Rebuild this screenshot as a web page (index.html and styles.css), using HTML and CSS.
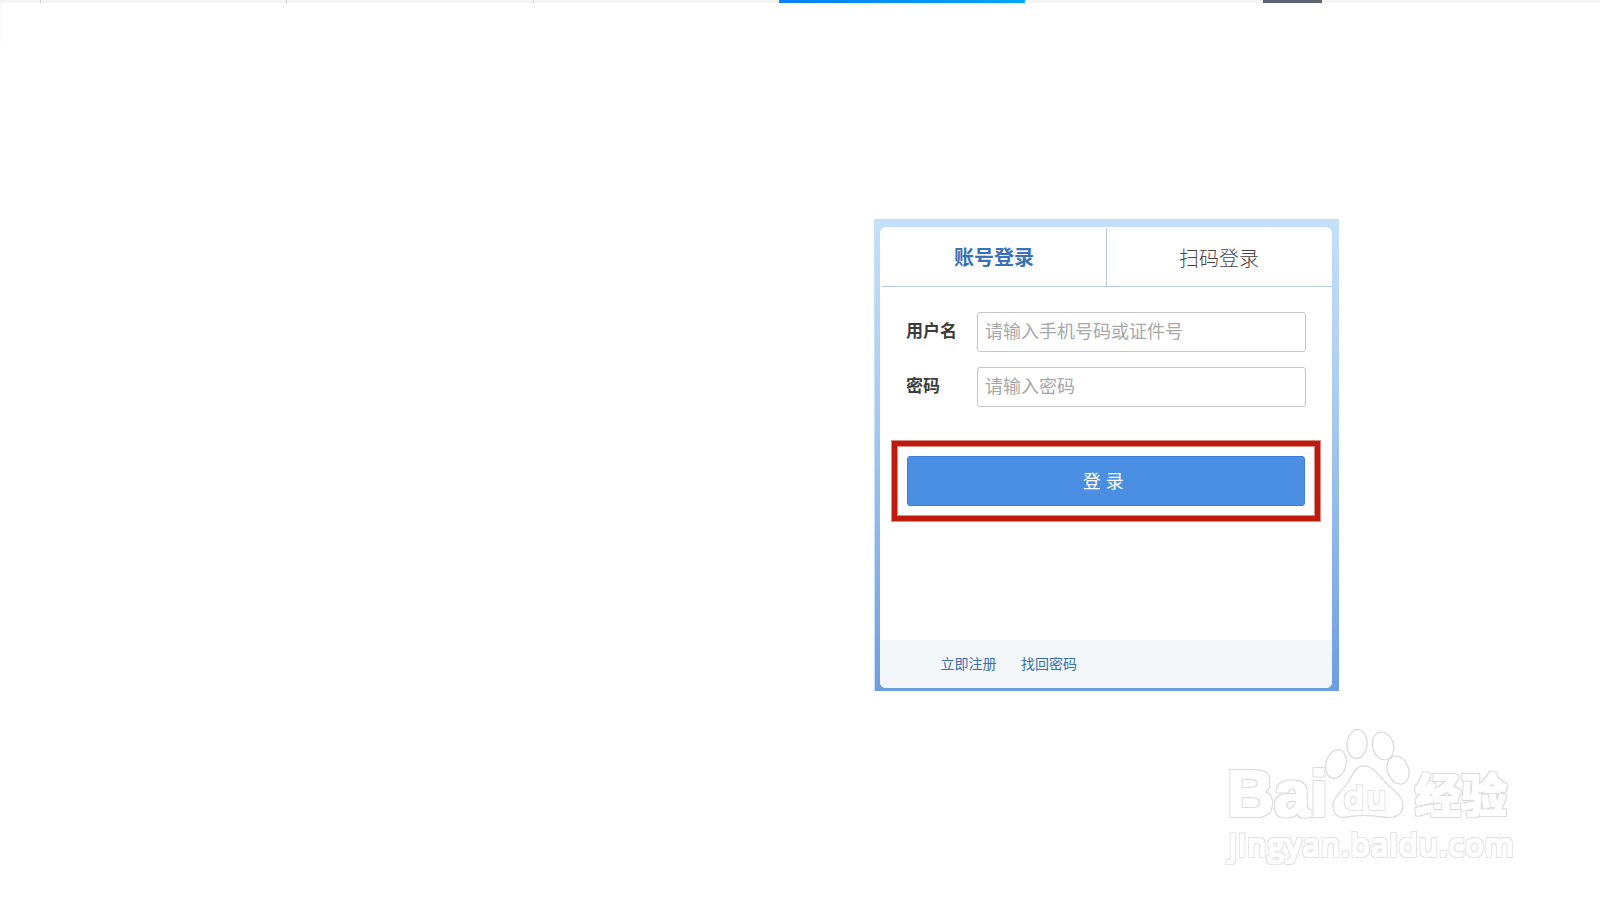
FILE: index.html
```html
<!DOCTYPE html>
<html lang="zh-CN">
<head>
<meta charset="utf-8">
<title>登录</title>
<link rel="stylesheet" href="styles.css">
</head>
<body>
<div class="topstrip">
  <span class="seg"></span>
  <span class="seg"></span>
  <span class="seg"></span>
  <span class="seg-active"></span>
  <span class="seg-thumb"></span>
</div>
<div class="edge-shade"></div>
<main class="stage">
  <section class="panel">
    <div class="card">
      <div class="tabs">
        <div class="tab tab-active">账号登录</div>
        <div class="tab tab-plain">扫码登录</div>
      </div>
      <form class="form">
        <div class="row">
          <label class="label" for="u">用户名</label>
          <input class="input" id="u" type="text" placeholder="请输入手机号码或证件号">
        </div>
        <div class="row">
          <label class="label" for="p">密码</label>
          <input class="input" id="p" type="text" placeholder="请输入密码">
        </div>
        <div class="btn-wrap">
          <button class="btn" type="button">登 录</button>
          <div class="highlight"></div>
        </div>
      </form>
      <div class="footer">
        <a class="link">立即注册</a>
        <a class="link">找回密码</a>
      </div>
    </div>
  </section>
</main>
<svg class="watermark" width="300" height="160" viewBox="0 0 300 160" aria-label="Baidu 经验 jingyan.baidu.com">
  <defs>
    <filter id="wm-thick" x="-10%" y="-20%" width="120%" height="140%">
      <feMorphology in="SourceAlpha" operator="dilate" radius="2.4" result="outer"/>
      <feFlood flood-color="#dcdcdc"/>
      <feComposite in2="outer" operator="in"/>
      <feGaussianBlur stdDeviation="0.7" result="line"/>
      <feMorphology in="SourceAlpha" operator="dilate" radius="1.2" result="inner"/>
      <feFlood flood-color="#ffffff"/>
      <feComposite in2="inner" operator="in" result="fill"/>
      <feMerge><feMergeNode in="line"/><feMergeNode in="fill"/></feMerge>
    </filter>
    <filter id="wm-thin" x="-5%" y="-20%" width="110%" height="140%">
      <feMorphology in="SourceAlpha" operator="dilate" radius="1.5" result="outer"/>
      <feFlood flood-color="#e4e4e4"/>
      <feComposite in2="outer" operator="in"/>
      <feGaussianBlur stdDeviation="0.6" result="line"/>
      <feMorphology in="SourceAlpha" operator="dilate" radius="0.5" result="inner"/>
      <feFlood flood-color="#ffffff"/>
      <feComposite in2="inner" operator="in" result="fill"/>
      <feMerge><feMergeNode in="line"/><feMergeNode in="fill"/></feMerge>
    </filter>
    <filter id="wm-soft" x="-10%" y="-10%" width="120%" height="120%">
      <feGaussianBlur stdDeviation="0.45"/>
    </filter>
  </defs>
  <g class="wm-paw" filter="url(#wm-soft)">
    <ellipse cx="111" cy="54" rx="10" ry="14.5" transform="rotate(15 111 54)"/>
    <ellipse cx="132" cy="34" rx="10" ry="14.5" transform="rotate(5 132 34)"/>
    <ellipse cx="158" cy="36" rx="10.5" ry="14" transform="rotate(-15 158 36)"/>
    <ellipse cx="173" cy="60" rx="10.5" ry="14.5" transform="rotate(-20 173 60)"/>
    <path d="M137 56 C147 55 152 63 159 71 C167 80 178 85 178 95 C178 106 168 109 158 107 C146 105 132 105 122 107 C113 109 108 104 108 96 C108 87 118 80 124 71 C128 64 130 57 137 56 Z"/>
  </g>
  <g filter="url(#wm-thick)">
    <text class="wm-big" x="2" y="106">Bai</text>
  </g>
  <g filter="url(#wm-thin)">
    <text class="wm-du" x="119" y="99">du</text>
  </g>
  <g filter="url(#wm-thick)">
    <text class="wm-cjk" x="190" y="102">经验</text>
  </g>
  <g filter="url(#wm-thin)">
    <text class="wm-url" x="4" y="146">jingyan.baidu.com</text>
  </g>
</svg>
</body>
</html>
```
FILE: styles.css
```css
* { box-sizing: border-box; }
html, body { margin: 0; padding: 0; height: 100%; background: #fff; overflow: hidden; }
body { font-family: "Noto Sans CJK SC", "Liberation Sans", sans-serif; position: relative; }

.topstrip { display: flex; height: 3px; padding-left: 40px; background: #f4f4f4; }
.seg { width: 246.33px; height: 3px; border-left: 1px solid #d4d4d4; }
.seg-active { width: 246px; height: 3px; background: linear-gradient(90deg, #0a80fb, #03a4fd); }
.seg-thumb { width: 59px; height: 3px; margin-left: 238px; background: #5d6472; }

.edge-shade { position: absolute; left: 0; top: 3px; width: 2px; height: 38px; background: #f9f9f9; }

.stage { padding: 216px 0 0 875px; }

.panel {
  width: 464px; height: 472px;
  padding: 8px 7px 3px 5px;
  background: linear-gradient(180deg, #c3e0fc 0%, #a8cbf0 40%, #6c9fe0 100%);
  box-shadow: -1px 0 0 rgba(140, 185, 235, 0.45);
}
.card {
  height: 100%; display: flex; flex-direction: column;
  background: #fff; border-radius: 6px; overflow: hidden;
}

.tabs { display: flex; height: 60px; margin: 0 0 0 2px; padding-top: 1px; border-bottom: 1px solid #b3cbe6; }
.tab {
  flex: 1; display: flex; align-items: center; justify-content: center;
  font-size: 20px; line-height: 1; color: #444;
}
.tab-plain { font-weight: 300; padding: 1px 1px 0 0; }
.tab-active { flex: none; width: 225px; color: #3a72b8; font-weight: 700; border-right: 1px solid #b3cbe6; padding-bottom: 1px; }

.form { flex: 1; padding: 25px 0 0 27px; }
.row { display: flex; align-items: center; height: 40px; margin-bottom: 15px; }
.label { width: 70px; padding-bottom: 5px; margin-left: -1px; margin-right: 1px; font-size: 17px; font-weight: 700; color: #3c3c3c; }
.input {
  width: 329px; height: 40px; padding: 0 7px 4px;
  border: 1px solid #c6c6c6; border-radius: 3px; outline: 0; background: #fff;
  font: 18px "Noto Sans CJK SC", sans-serif; color: #333;
}
.input::placeholder { color: #a8a8a8; opacity: 1; }

.btn-wrap { position: relative; width: 398px; height: 50px; margin-top: 49px; }
.btn {
  display: block; width: 100%; height: 100%; padding: 0 5px 3px 0;
  border: 1px solid #3a7ee0; border-radius: 3px; background: #4a8fe2;
  color: #fff; font: 18px "Noto Sans CJK SC", sans-serif; letter-spacing: 0.5px;
}
.highlight {
  position: absolute; left: -15px; right: -15px; top: -15px; bottom: -15px;
  border: 5px solid #bf1b0c;
  box-shadow: 0 0 0 1px #d98a82, inset 0 0 0 1px #d98a82;
}

.footer {
  display: flex; align-items: center; gap: 24.5px;
  height: 48px; padding: 0 0 2px 60.5px; background: #f4f7f9;
}
.link { font-size: 14px; line-height: 1; color: #3a6cae; }

.watermark { position: absolute; left: 1225px; top: 710px; overflow: visible; }
.wm-paw { fill: #fff; stroke: #dcdcdc; stroke-width: 1.3; }
.wm-big { font: 700 65px "Liberation Sans", sans-serif; }
.wm-du { font: 400 31px "DejaVu Sans", sans-serif; letter-spacing: 3px; }
.wm-cjk { font: 700 46px "Noto Sans CJK SC", sans-serif; }
.wm-url { font: 400 31px "Open Sans", sans-serif; letter-spacing: 1.3px; }
```
